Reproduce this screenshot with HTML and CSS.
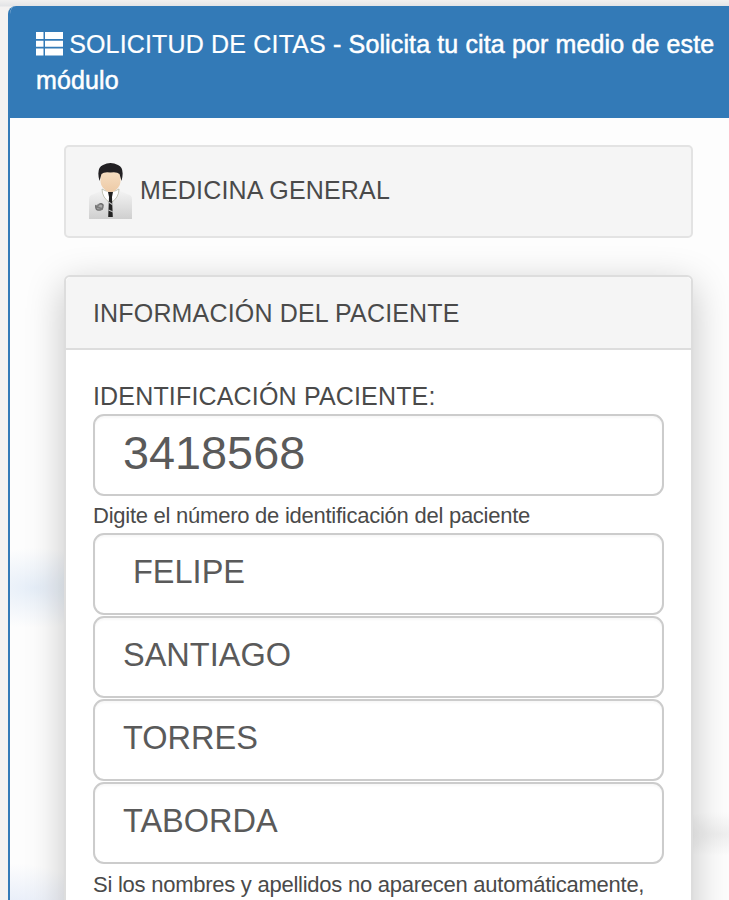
FILE: index.html
```html
<!DOCTYPE html>
<html lang="es">
<head>
  <meta charset="UTF-8">
  <meta name="viewport" content="width=device-width, initial-scale=1.0">
  <title>Solicitud de citas</title>
  <link rel="stylesheet" href="styles.css">
</head>
<body>

<div class="panel-primary">
  <div class="panel-title">
    <svg class="icon-list" width="27" height="24" viewBox="0 0 27 24">
      <path fill="#fff" d="M0 0h7.5v7H0zM9 0h18v7H9zM0 8.7h7.5v6H0zM9 8.7h18v6H9zM0 16.5h7.5v7H0zM9 16.5h18v7H9z"/>
    </svg>
    <span class="title-main">SOLICITUD DE CITAS</span> <span class="title-sub">- Solicita tu cita por medio de este</span><br>
    <span class="title-sub">módulo</span>
  </div>

  <div class="panel-content">
    <div class="well">
      <svg class="doctor" width="44" height="58" viewBox="0 0 44 58">
        <defs>
          <linearGradient id="coat" x1="0" y1="0" x2="0" y2="1">
            <stop offset="0" stop-color="#f4f4f4"/>
            <stop offset="1" stop-color="#cfcfcf"/>
          </linearGradient>
          <linearGradient id="skin" x1="0" y1="0" x2="0" y2="1">
            <stop offset="0" stop-color="#f7e0c4"/>
            <stop offset="1" stop-color="#ecc9a5"/>
          </linearGradient>
        </defs>
        <path fill="url(#coat)" d="M0 57V37Q0 33 5 32L14 28H29L38 32Q43 33 43 37V57Z"/>
        <path fill="#fff" stroke="#b5b6a4" stroke-width=".8" d="M13 27Q13 36 21.500 41Q30 36 30 27L26 29H17Z"/>
        <path fill="url(#skin)" d="M11.500 14Q12 8 21.500 8Q31 8 31.500 14V20Q31 27 21.500 31Q12 27 11.500 20Z"/>
        <path fill="#222023" d="M10.500 19Q7 6 14 3Q21.500-1 29 3Q36 6 32.500 19L30.500 12Q28 9.500 21.500 10.500Q15 9.500 12.500 12Z"/>
        <path fill="#222" d="M19 30h5l-1 5 .8 20h-4.600l.8-20z"/>
        <path stroke="#bbb" stroke-width="1.200" d="M19.500 40l4.500 3M19.500 48l4.500 2"/>
        <path fill="none" stroke="#666" stroke-width="1.500" d="M7 43Q6 48 10 48T14 43Q11 40 8 45L14 47"/>
        <circle cx="10.500" cy="45" r="3.500" fill="#8a8a8a" fill-opacity=".6"/>
      </svg>
      <span>MEDICINA GENERAL</span>
    </div>

    <div class="panel-default">
      <div class="panel-heading">INFORMACIÓN DEL PACIENTE</div>
      <div class="panel-body">
        <label class="field-label" for="identificacion">IDENTIFICACIÓN PACIENTE:</label>
        <input class="form-control input-id" type="text" id="identificacion" value="3418568">
        <p class="help-block">Digite el número de identificación del paciente</p>
        <input class="form-control input-first" type="text" id="nombre1" value="FELIPE">
        <input class="form-control" type="text" id="nombre2" value="SANTIAGO">
        <input class="form-control" type="text" id="apellido1" value="TORRES">
        <input class="form-control" type="text" id="apellido2" value="TABORDA">
        <p class="help-block">Si los nombres y apellidos no aparecen automáticamente,</p>
      </div>
    </div>
  </div>
</div>

</body>
</html>
```

FILE: styles.css
```css
* { box-sizing: border-box; }
body { margin: 0; height: 900px; overflow: hidden; padding: 6px 0 0 8px; background: linear-gradient(#f1f0ef, #e3e4e6 6px, #f4f2f1 7px); font-family: "Liberation Sans", Arial, sans-serif; font-size: 25px; letter-spacing: 0.17px; color: #4a4a4a; }

.panel-primary { height: 910px; border-left: 2px solid #337ab7; border-radius: 8px 0 0 0; background: #fdfdfd; overflow: hidden; }
.panel-title { height: 112px; padding: 20px 0 0 26px; background: #337ab7; color: #fff; line-height: 36px; white-space: nowrap; }
.icon-list { vertical-align: -3px; margin-right: -1px; }
.title-main { -webkit-text-stroke: 0.2px #fff; }
.title-sub { -webkit-text-stroke: 0.5px #fff; letter-spacing: 0.13px; }

.panel-content {
  height: 800px;
  padding: 27px 36px 0 54px;
  background:
    radial-gradient(ellipse 90px 40px at 25px 470px, #e6eef8, rgba(230, 238, 248, 0)),
    radial-gradient(ellipse 90px 50px at 0 795px, #e3eaf8, rgba(227, 234, 248, 0)),
    radial-gradient(ellipse 80px 22px at 710px 716px, #efefef, rgba(239, 239, 239, 0)),
    #fdfdfd;
}

.well { display: flex; align-items: center; height: 93px; padding: 0 0 2px 23px; border: 2px solid #e3e3e3; border-radius: 5px; background: #f5f5f5; gap: 7px; }

.panel-default { height: 700px; margin-top: 37px; border: 2px solid #ddd; border-radius: 6px; background: #fff; box-shadow: 0 10px 38px rgba(0, 0, 0, 0.23); }
.panel-heading { height: 73px; padding-left: 27px; border-bottom: 2px solid #ddd; border-radius: 5px 5px 0 0; background: #f5f5f5; line-height: 72px; }
.panel-body { padding: 31px 27px 0; }
.field-label { display: block; height: 33px; line-height: 30px; }

.form-control { display: block; width: 100%; height: 82px; margin-bottom: 1px; padding: 0 28px 4px; border: 2px solid #ccc; border-radius: 11px; background: #fff; color: #5a5a5a; font-family: inherit; font-size: 32.5px; box-shadow: inset 0 2px 2px rgba(0, 0, 0, 0.03); }
.input-id { margin-bottom: 0; font-size: 46.8px; }
.input-first { padding-left: 38px; }

.help-block { height: 37px; margin: 0; font-size: 22px; letter-spacing: -0.25px; line-height: 39px; white-space: nowrap; }
```
